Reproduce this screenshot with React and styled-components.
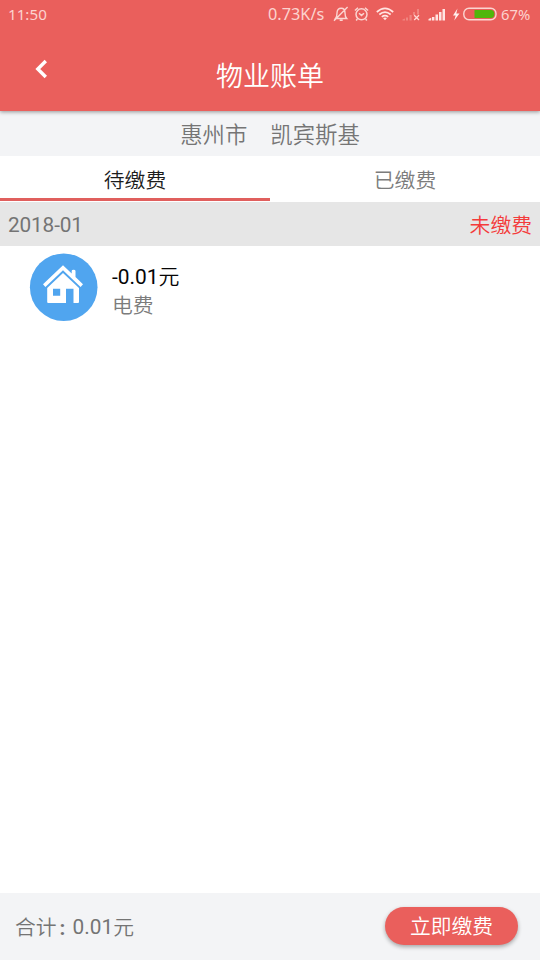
import React from "react";
import styled, { createGlobalStyle } from "styled-components";

const GlobalStyle = createGlobalStyle`
  *, *::before, *::after { box-sizing: border-box; }
  body {
    margin: 0;
    background: #fff;
    font-family: Roboto, "Noto Sans CJK SC", sans-serif;
  }
`;

const Screen = styled.div`
  display: flex;
  flex-direction: column;
  width: 540px;
  height: 960px;
  overflow: hidden;
  background: #fff;
`;

const Header = styled.header`
  position: relative;
  height: 111px;
  flex: none;
  background: #ea5f5c;
  box-shadow: 0 1px 4px rgba(0, 0, 0, 0.4);
`;

const StatusBar = styled.div`
  display: flex;
  align-items: center;
  justify-content: space-between;
  height: 28px;
  padding: 0 8px 0 8px;
  color: #fcd3cf;
  font: 400 15px/28px "Noto Sans", Roboto, sans-serif;
`;

const StatusText = styled.span`
  height: 28px;
  font-size: ${(p) => p.$size}px;
  width: ${(p) => p.$width}px;
  margin-left: ${(p) => p.$gap ?? 0}px;
  white-space: nowrap;
`;

const StatusGroup = styled.div`
  display: flex;
  align-items: center;
`;

const StatusIcon = styled.svg`
  display: block;
  flex: none;
  margin-left: ${(p) => p.$gap}px;
`;

const TitleBar = styled.div`
  display: grid;
  grid-template-columns: 84px 1fr 84px;
  height: 83px;
`;

const BackButton = styled.button`
  display: flex;
  align-items: center;
  justify-content: center;
  height: 82px;
  padding: 0 2px 0 0;
  border: 0;
  background: none;
`;

const Title = styled.h1`
  margin: 0;
  padding-top: 8px;
  text-align: center;
  color: #fff;
  font-size: 27px;
  font-weight: 350;
  line-height: 82px;
`;

const Location = styled.div`
  display: flex;
  flex: none;
  justify-content: center;
  gap: 23px;
  height: 45px;
  background: #f3f4f6;
  color: #757575;
  font-size: 22.4px;
  font-weight: 350;
  line-height: 48px;
`;

const Tabs = styled.div`
  display: grid;
  flex: none;
  grid-template-columns: 1fr 1fr;
  height: 46px;
`;

const Tab = styled.div`
  height: ${(p) => (p.$active ? 45 : 46)}px;
  border-bottom: ${(p) => (p.$active ? "3px solid #e05f5d" : "0")};
  color: ${(p) => (p.$active ? "#1c1c1c" : "#7c7c7c")};
  text-align: center;
  font-size: 20.8px;
  font-weight: 350;
  line-height: 50px;
`;

const MonthRow = styled.div`
  display: flex;
  flex: none;
  justify-content: space-between;
  height: 44px;
  padding: 0 8px 0 8px;
  background: #e6e6e6;
  color: #747474;
  font-size: 20.8px;
  line-height: 48px;
`;

const Month = styled.span`
  letter-spacing: -0.15px;
  line-height: 47px;
`;

const Unpaid = styled.span`
  color: #f43b3b;
  font-weight: 350;
`;

const BillRow = styled.div`
  display: flex;
  flex: 1;
  padding: 7px 0 0 29px;
`;

const BillText = styled.div`
  display: flex;
  flex-direction: column;
  margin: 10px 0 0 14px;
`;

const Amount = styled.div`
  color: #050505;
  font-size: 20.9px;
  line-height: 28px;
`;

const Kind = styled.div`
  color: #7c7c7c;
  font-size: 20.8px;
  font-weight: 350;
  line-height: 30px;
`;

const Footer = styled.footer`
  display: flex;
  flex: none;
  align-items: flex-start;
  justify-content: space-between;
  height: 67px;
  padding: 14px 22px 0 15px;
  background: #f3f4f6;
`;

const Total = styled.div`
  display: flex;
  color: #747474;
  font-size: 20.8px;
  font-weight: 350;
  line-height: 42px;
`;

const Colon = styled.span`
  width: 16px;
  padding-left: 3px;
  font-weight: 700;
`;

const Figure = styled.span`
  font-weight: 400;
  line-height: 41px;
`;

const PayButton = styled.button`
  width: 133px;
  height: 38px;
  padding: 3px 0 0;
  border: 0;
  border-radius: 19px;
  background: #ea5f5c;
  box-shadow: 0 2px 4px rgba(0, 0, 0, 0.32);
  color: #fff;
  font-family: inherit;
  font-size: 20.8px;
  font-weight: 350;
  line-height: 35px;
`;

const Unit = styled.span`
  font-weight: 350;
`;

function BellOff() {
  return (
    <StatusIcon $gap={0} width="16" height="16" viewBox="0 0 16 16" fill="none" stroke="#fbd5d1" strokeWidth="1.4">
      <path d="M2.5 12.5 C4 11 4 9.5 4 7 C4 4 5.5 2.3 8.2 2.3 C11 2.3 12 4 12 7 C12 9.5 12.2 11 13.7 12.5 Z M6.7 14.3 H9.7 M1 14.7 L14.6 1" />
    </StatusIcon>
  );
}

function Alarm() {
  return (
    <StatusIcon $gap={5} width="15" height="16" viewBox="0 0 15 16" fill="none" stroke="#fbd5d1" strokeWidth="1.5">
      <circle cx="7.5" cy="8.3" r="5.5" />
      <path d="M5 7.3 L7.5 9.4 L10 7.3 M0.9 4.5 L4 1.7 M14.1 4.5 L11 1.7 M3.3 13 L2.2 14.5 M11.7 13 L12.8 14.5" />
    </StatusIcon>
  );
}

function Wifi() {
  return (
    <StatusIcon $gap={7} width="18" height="14" viewBox="0 0 18 14" fill="none" stroke="#ffe5e2" strokeWidth="1.7">
      <path d="M0.8 5 Q9 -2.2 17.2 5 M3.3 7.5 Q9 2.7 14.7 7.5 M5.8 9.9 Q9 7.4 12.2 9.9" />
      <path d="M7 11 Q9 9.8 11 11 L9 13.3 Z" fill="#ffe5e2" stroke="none" />
    </StatusIcon>
  );
}

function Signal({ absent }) {
  return (
    <StatusIcon $gap={8} width="18" height="13" viewBox="0 0 18 13">
      {absent ? (
        <>
          <path
            d="M0.5 12.5 V11.5 L3 10.5 V12.5 Z M4 9.5 H6 V12.5 H4 Z M7.5 7 H9.7 V12.5 H7.5 Z M11 4 H13 V7 H11 Z M15 1 H17 V6.5 H15 Z"
            fill="#f08580"
          />
          <path d="M12.2 7.2 L17 12 M17 7.2 L12.2 12" stroke="#ffd9d5" strokeWidth="1.3" />
        </>
      ) : (
        <path
          d="M0.5 12.5 V11 L3.2 9.8 V12.5 Z M4 9 H6.4 V12.5 H4 Z M7.5 6.5 H10 V12.5 H7.5 Z M11 4 H13.5 V12.5 H11 Z M14.5 1 H17 V12.5 H14.5 Z"
          fill="#ffe5e2"
        />
      )}
    </StatusIcon>
  );
}

function Bolt() {
  return (
    <StatusIcon $gap={6} width="8" height="13" viewBox="0 0 8 13" fill="#fff0ee">
      <path d="M5.5 0.5 L1 7.4 H3.7 L2.2 12.5 L7.5 5.5 H4.3 Z" />
    </StatusIcon>
  );
}

function Battery() {
  return (
    <StatusIcon $gap={3} width="34" height="14" viewBox="0 0 34 14">
      <rect x="0.8" y="1.2" width="32.2" height="11.6" rx="5.2" fill="none" stroke="#fbd5d1" strokeWidth="1.4" />
      <path d="M11.5 3 H28 Q31.3 3 31.3 7 Q31.3 11 28 11 H11.5 Z" fill="#51b60b" />
    </StatusIcon>
  );
}

function HouseBadge() {
  return (
    <svg width="69" height="69" viewBox="0 0 69 69">
      <circle cx="34.7" cy="34.2" r="33.8" fill="#50a5ef" />
      <g fill="#fff">
        <path d="M34 12.3 L42.7 20.5 V18 Q42.7 16.7 44.5 16.7 Q46.5 16.7 46.5 18 V24.1 L54 31.3 L51.6 34 L34 17.3 L16.4 34 L14 31.3 Z" />
        <path
          fillRule="evenodd"
          d="M18.2 35 L34 20 L50 35 V49 Q50 50 49 50 H44.5 V35.7 H37 V50 H19.2 Q18.2 50 18.2 49 Z M24 35.7 V42.8 H31.2 V35.7 Z"
        />
      </g>
    </svg>
  );
}

export default function App() {
  return (
    <>
      <GlobalStyle />
      <Screen>
        <Header>
          <StatusBar>
            <StatusText $size={15.2} $width={50}>11:50</StatusText>
            <StatusGroup>
              <StatusText $size={16.3} $width={65}>0.73K/s</StatusText>
              <BellOff />
              <Alarm />
              <Wifi />
              <Signal absent />
              <Signal />
              <Bolt />
              <Battery />
              <StatusText $size={14.8} $width={31} $gap={4}>67%</StatusText>
            </StatusGroup>
          </StatusBar>
          <TitleBar>
            <BackButton aria-label="返回">
              <svg width="14" height="20" viewBox="0 0 14 20" fill="none" stroke="#fff" strokeWidth="3.4">
                <path d="M11.8 2 L3.8 10 L11.8 18" />
              </svg>
            </BackButton>
            <Title>物业账单</Title>
          </TitleBar>
        </Header>
        <Location>
          <span>惠州市</span>
          <span>凯宾斯基</span>
        </Location>
        <Tabs>
          <Tab $active>待缴费</Tab>
          <Tab>已缴费</Tab>
        </Tabs>
        <MonthRow>
          <Month>2018-01</Month>
          <Unpaid>未缴费</Unpaid>
        </MonthRow>
        <BillRow>
          <HouseBadge />
          <BillText>
            <Amount>-0.01<Unit>元</Unit></Amount>
            <Kind>电费</Kind>
          </BillText>
        </BillRow>
        <Footer>
          <Total>
            合计<Colon>:</Colon>
            <Figure>0.01</Figure>元
          </Total>
          <PayButton>立即缴费</PayButton>
        </Footer>
      </Screen>
    </>
  );
}
